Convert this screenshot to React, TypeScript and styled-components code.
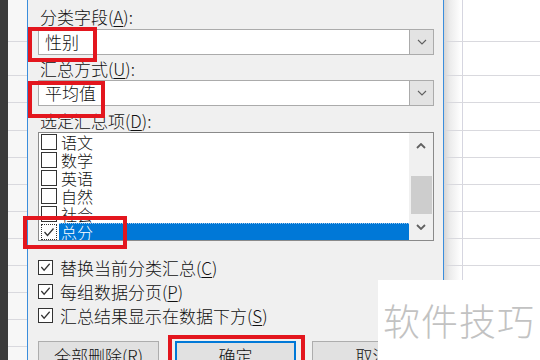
import React from "react";
import styled, { createGlobalStyle } from "styled-components";

const GlobalStyle = createGlobalStyle`
  html, body {
    margin: 0;
    padding: 0;
  }
  body {
    width: 540px;
    height: 360px;
    overflow: hidden;
    background: #ffffff;
    font-family: "Noto Sans CJK SC", "Noto Sans", sans-serif;
    font-weight: 300;
    color: #111;
  }
`;

// spreadsheet row heights behind the dialog (first rows are uneven)
const rowHeights = [42, 34, 27, 28, 27, 27, 27, 27, 27, 27, 27, 27, 27, 27];

const listItems = ["语文", "数学", "英语", "自然", "社会", "总分"];

const options = [
  { text: "替换当前分类汇总", key: "C" },
  { text: "每组数据分页", key: "P" },
  { text: "汇总结果显示在数据下方", key: "S" },
];

const Chevron: React.FC<{ up?: boolean; bold?: boolean }> = ({ up, bold }) => (
  <svg width="10" height="6" viewBox="0 0 10 6">
    <polyline
      points={up ? "1,5 5,1 9,5" : "1,1 5,5 9,1"}
      fill="none"
      stroke="#606060"
      strokeWidth={bold ? 1.8 : 1.1}
    />
  </svg>
);

const Tick = () => (
  <svg width="14" height="14" viewBox="0 0 14 14">
    <polyline points="2.5,7 5.5,10.5 11.5,3.5" fill="none" stroke="#333" strokeWidth="1.3" />
  </svg>
);

const App: React.FC = () => {
  return (
    <>
      <GlobalStyle />
      <Page>
        <DarkStrip />
        <Sheet $width={19}>
          {rowHeights.map((h, i) => (
            <SheetRow key={i} style={{ height: h }} />
          ))}
        </Sheet>

        <Dialog>
          <TopEdge />
          <Body>
            <FieldLabel $top={7}>
              分类字段(<u>A</u>):
            </FieldLabel>
            <Combo $top={2}>
              <ComboValue>性别</ComboValue>
              <ComboButton>
                <Chevron />
              </ComboButton>
            </Combo>

            <FieldLabel $top={4}>
              汇总方式(<u>U</u>):
            </FieldLabel>
            <Combo $top={1}>
              <ComboValue>平均值</ComboValue>
              <ComboButton>
                <Chevron />
              </ComboButton>
            </Combo>

            <FieldLabel $top={5}>
              选定汇总项(<u>D</u>):
            </FieldLabel>
            <ListBox>
              <ListRows>
                {listItems.map((item, i) => {
                  const selected = i === listItems.length - 1;
                  return (
                    <ListRow key={item}>
                      <ListCheck $focus={selected}>{selected && <Tick />}</ListCheck>
                      <ListText $selected={selected}>{item}</ListText>
                    </ListRow>
                  );
                })}
              </ListRows>
              <ScrollBar>
                <ScrollArrow>
                  <Chevron up bold />
                </ScrollArrow>
                <ScrollTrack>
                  <ScrollThumb />
                </ScrollTrack>
                <ScrollArrow>
                  <Chevron bold />
                </ScrollArrow>
              </ScrollBar>
            </ListBox>

            <Options>
              {options.map((o) => (
                <OptionRow key={o.key}>
                  <OptionBox>
                    <Tick />
                  </OptionBox>
                  <span>
                    {o.text}(<u>{o.key}</u>)
                  </span>
                </OptionRow>
              ))}
            </Options>

            <ButtonRow>
              <Button>
                全部删除(<u>R</u>)
              </Button>
              <Button $primary>确定</Button>
              <Button>取消</Button>
            </ButtonRow>
          </Body>
        </Dialog>

        <RightSheet>
          {rowHeights.map((h, i) => (
            <SheetRow key={i} style={{ height: h }} />
          ))}
        </RightSheet>

        <Mark $x={28} $y={27} $w={69} $h={35} />
        <Mark $x={28} $y={81} $w={77} $h={37} />
        <Mark $x={23} $y={216} $w={104} $h={33} />
        <Mark $x={168} $y={335} $w={137} $h={40} />

        <Watermark>软件技巧</Watermark>
      </Page>
    </>
  );
};

export default App;

const Page = styled.div`
  position: relative;
  display: flex;
  width: 540px;
  height: 360px;
  overflow: hidden;
  background: #ffffff;
`;

const DarkStrip = styled.div`
  width: 8px;
  flex: none;
  background: #3b3b3b;
`;

const Sheet = styled.div<{ $width: number }>`
  width: ${(p) => p.$width}px;
  flex: none;
  display: flex;
  flex-direction: column;
  background: #f7f7f7;
`;

const SheetRow = styled.div`
  box-sizing: border-box;
  flex: none;
  border-bottom: 1px solid #d9d9de;
`;

const RightSheet = styled.div`
  flex: 1;
  display: flex;
  flex-direction: column;
  background:
    linear-gradient(to right, #d6d6d6 0, #ececec 6px, rgba(255, 255, 255, 0) 17px),
    linear-gradient(to right, transparent 18px, #d6d6e0 18px, #d6d6e0 19px, transparent 19px),
    #ffffff;
`;

const Dialog = styled.div`
  width: 417px;
  flex: none;
  box-sizing: border-box;
  display: flex;
  flex-direction: column;
  background: #f0f0f0;
  border-left: 1px solid #3a8ddc;
  border-right: 1px solid #3a8ddc;
`;

const TopEdge = styled.div`
  height: 4px;
  background: #fbfbfb;
`;

const Body = styled.div`
  display: flex;
  flex-direction: column;
  padding: 0 9px 0 10px;
`;

const FieldLabel = styled.div<{ $top: number }>`
  margin-top: ${(p) => p.$top}px;
  height: 20px;
  line-height: 20px;
  padding-left: 2px;
  font-size: 17px;
  color: #111;
  white-space: nowrap;

  u {
    text-underline-offset: 2px;
  }
`;

const Combo = styled.div<{ $top: number }>`
  margin-top: ${(p) => p.$top}px;
  height: 26px;
  display: flex;
`;

const ComboValue = styled.div`
  flex: 1;
  box-sizing: border-box;
  background: #ffffff;
  border: 1px solid #ababab;
  border-right: none;
  padding-left: 6px;
  font-size: 17px;
  line-height: 24px;
  color: #111;
`;

const ComboButton = styled.div`
  width: 25px;
  box-sizing: border-box;
  display: flex;
  align-items: center;
  justify-content: center;
  background: #e3e3e3;
  border: 1px solid #ababab;
`;

const ListBox = styled.div`
  margin-top: 1px;
  height: 109px;
  box-sizing: border-box;
  display: flex;
  background: #ffffff;
  border: 1px solid #8a8a8a;
  overflow: hidden;
`;

const ListRows = styled.div`
  flex: 1;
  display: flex;
  flex-direction: column;
`;

const ListRow = styled.div`
  height: 18px;
  flex: none;
  display: flex;
  align-items: center;
`;

const ListCheck = styled.div<{ $focus?: boolean }>`
  width: 16px;
  height: 16px;
  box-sizing: border-box;
  margin-left: 2px;
  display: flex;
  align-items: center;
  justify-content: center;
  background: #ffffff;
  border: 1px ${(p) => (p.$focus ? "dotted" : "solid")} #333;
`;

const ListText = styled.div<{ $selected?: boolean }>`
  flex: 1;
  height: 18px;
  box-sizing: border-box;
  margin-left: 2px;
  padding-left: 2px;
  font-size: 16px;
  line-height: 17px;
  color: ${(p) => (p.$selected ? "#ffffff" : "#111")};
  background: ${(p) => (p.$selected ? "#0078d7" : "transparent")};
  border-top: 1px dotted ${(p) => (p.$selected ? "#9cc6ec" : "transparent")};
`;

const ScrollBar = styled.div`
  width: 24px;
  flex: none;
  display: flex;
  flex-direction: column;
  background: #f0f0f0;
`;

const ScrollArrow = styled.div`
  height: 28px;
  display: flex;
  align-items: center;
  justify-content: center;
`;

const ScrollTrack = styled.div`
  flex: 1;
  display: flex;
  flex-direction: column;
  align-items: center;
`;

const ScrollThumb = styled.div`
  margin-top: 16px;
  width: 21px;
  height: 38px;
  background: #cdcdcd;
`;

const Options = styled.div`
  margin-top: 14px;
  display: flex;
  flex-direction: column;
`;

const OptionRow = styled.div`
  height: 24px;
  display: flex;
  align-items: center;
  gap: 7px;
  font-size: 17px;
  color: #111;
  white-space: nowrap;

  u {
    text-underline-offset: 2px;
  }
`;

const OptionBox = styled.div`
  width: 15px;
  height: 15px;
  box-sizing: border-box;
  display: flex;
  align-items: center;
  justify-content: center;
  background: #ffffff;
  border: 1px solid #333;
`;

const ButtonRow = styled.div`
  margin-top: 14px;
  display: flex;
  gap: 16px;
`;

const Button = styled.div<{ $primary?: boolean }>`
  width: 121px;
  height: 28px;
  box-sizing: border-box;
  display: flex;
  align-items: center;
  justify-content: center;
  font-size: 17px;
  color: #111;
  background: #e1e1e1;
  border: 1px solid ${(p) => (p.$primary ? "#0078d7" : "#adadad")};
  box-shadow: ${(p) => (p.$primary ? "inset 0 0 0 1px #0078d7" : "none")};
`;

const Mark = styled.div<{ $x: number; $y: number; $w: number; $h: number }>`
  position: absolute;
  left: ${(p) => p.$x}px;
  top: ${(p) => p.$y}px;
  width: ${(p) => p.$w}px;
  height: ${(p) => p.$h}px;
  box-sizing: border-box;
  border: 4px solid #e3161e;
`;

const Watermark = styled.div`
  position: absolute;
  left: 378px;
  top: 280px;
  width: 162px;
  height: 80px;
  box-sizing: border-box;
  padding-left: 5px;
  display: flex;
  align-items: center;
  background: #ffffff;
  font-size: 37px;
  letter-spacing: 1px;
  color: #c2c2c2;
  white-space: nowrap;
`;
